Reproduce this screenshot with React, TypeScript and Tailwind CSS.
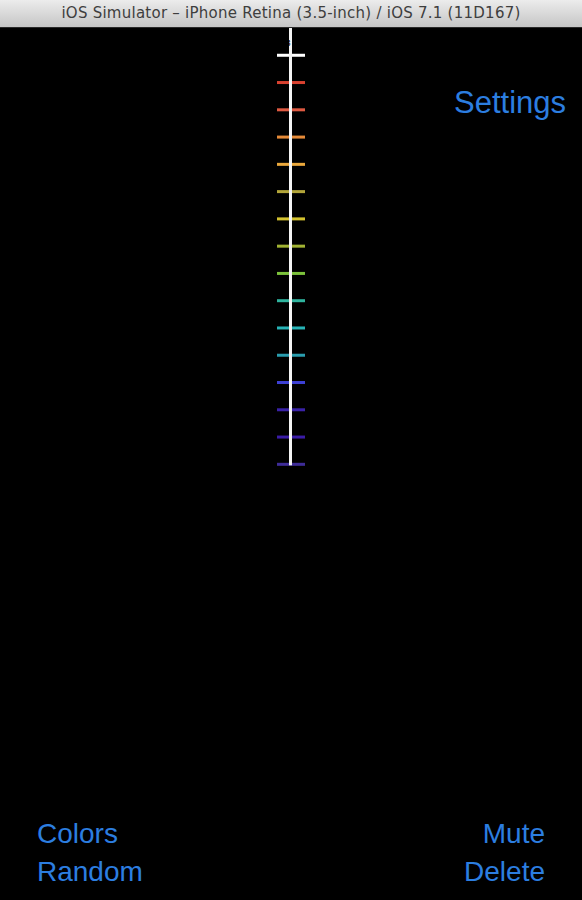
import React from 'react'

const dashColors = [
  '#ffffff',
  '#d8412f',
  '#df5a42',
  '#e58a38',
  '#eaa83c',
  '#b3a63a',
  '#d3c22f',
  '#a1b233',
  '#7cc23b',
  '#2fb49e',
  '#27b3b6',
  '#2a9dae',
  '#3d40d4',
  '#3a22a8',
  '#3a1ca6',
  '#3e2c98',
]

const STEP = 27.27

function Ruler() {
  const height = 440
  return (
    <svg width="28" height={height} viewBox={`0 0 28 ${height}`} className="block shrink-0">
      {dashColors.map((c, i) => (
        <rect
          key={c + i}
          x="0"
          y={STEP * (i + 1) - 1.5}
          width="28"
          height="3"
          fill={c}
        />
      ))}
      <rect x="12" y="0" width="3" height={STEP * 16 + 1} fill="#f4f4f4" />
      <text
        x="11"
        y="18"
        fontSize="9"
        fontFamily="Liberation Sans, sans-serif"
        fill="#000"
        textAnchor="middle"
      >
        3
      </text>
    </svg>
  )
}

export default function App() {
  return (
    <div className="flex h-[900px] w-[582px] flex-col bg-black font-['Liberation_Sans',Arial,sans-serif]">
      <div className="flex h-[28px] shrink-0 items-center justify-center border-b border-[#2a2a2a] bg-gradient-to-b from-[#ececec] to-[#c6c6c6]">
        <span className="font-['DejaVu_Sans',sans-serif] text-[15px] leading-none tracking-[0.25px] text-[#3e3e3e]">
          iOS Simulator – iPhone Retina (3.5-inch) / iOS 7.1 (11D167)
        </span>
      </div>

      <div className="flex flex-1 flex-col">
        <div className="flex flex-1">
          <div className="min-w-0 flex-1" />
          <Ruler />
          <div className="min-w-0 flex-1">
            <div className="flex justify-end pr-[16px] pt-[57px]">
              <span className="text-[31px] leading-[36px] text-[#2c7ee0]">
                Settings
              </span>
            </div>
          </div>
        </div>

        <div className="flex justify-between pb-[9px] pl-[37px] pr-[37px]">
          <div className="flex flex-col items-start">
            <span className="text-[28px] leading-[38px] text-[#2c7ee0]">Colors</span>
            <span className="text-[28px] leading-[38px] text-[#2c7ee0]">Random</span>
          </div>
          <div className="flex flex-col items-end">
            <span className="text-[28px] leading-[38px] text-[#2c7ee0]">Mute</span>
            <span className="text-[28px] leading-[38px] text-[#2c7ee0]">Delete</span>
          </div>
        </div>
      </div>
    </div>
  )
}
